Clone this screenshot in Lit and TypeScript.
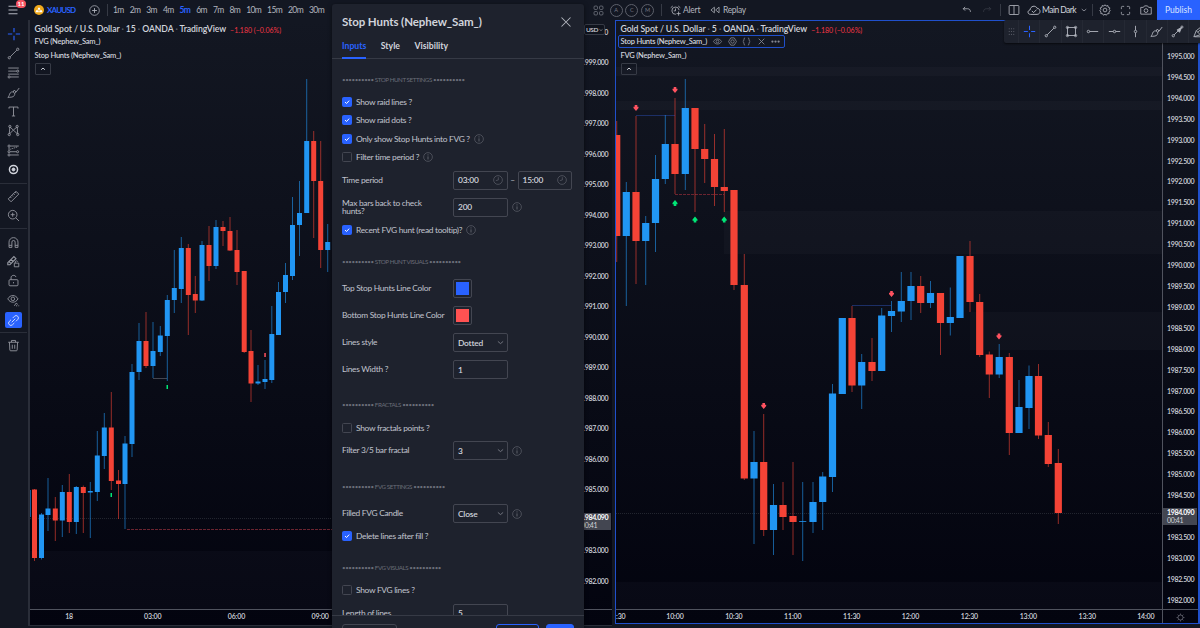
import { LitElement, html, css, svg, nothing } from 'lit';
import { customElement, property } from 'lit/decorators.js';
import { classMap } from 'lit/directives/class-map.js';

type Candle = [x: number, up: number, high: number, top: number, bottom: number, low: number];

interface Line {
  x1: number;
  x2: number;
  y: number;
  kind: string;
}

interface Marker {
  x: number;
  y: number;
  dir: 'up' | 'down';
}

interface Band {
  x: number;
  y: number;
  h: number;
}

interface Pane {
  interval: string;
  active: boolean;
  indicators: string[];
  left: number;
  top: number;
  width: number;
  candleWidth: number;
  candles: Candle[];
  lines: Line[];
  markers: Marker[];
  bands: Band[];
  times: string[];
  prices: string[];
}

// the label next to the last price is left blank, its tag takes the place
const priceRange = (from: number, to: number, step: number) => {
  const prices: string[] = [];
  for (let p = from; p >= to; p -= step) {
    prices.push(p === 1984 ? '' : p.toFixed(3));
  }
  return prices;
};

const leftPane: Pane = {
  interval: '15',
  active: false,
  indicators: ['FVG (Nephew_Sam_)', 'Stop Hunts (Nephew_Sam_)'],
  left: 30,
  top: 20,
  width: 547,
  candleWidth: 5,
  candles: [
    [34.5, 0, 489, 489.5, 558, 561],
    [41.5, 1, 513, 514.5, 558, 559.5],
    [48, 1, 478, 508.5, 515, 531],
    [55.3, 0, 497, 508.5, 520.5, 541],
    [62.3, 1, 485, 492, 520.5, 537],
    [69.3, 0, 474, 492, 522, 533],
    [76.3, 1, 486, 487, 522, 534],
    [83.3, 0, 485.5, 487, 493, 533],
    [90.3, 1, 482, 491, 492.5, 538],
    [97.3, 1, 431, 455.5, 492, 501],
    [104.3, 1, 413, 427.5, 456, 469],
    [111.3, 0, 392, 427.5, 481, 490],
    [118.5, 0, 470, 480.5, 484, 519],
    [125, 1, 436, 443.5, 484, 529],
    [132, 1, 364, 372, 444, 457],
    [139, 1, 323, 341, 372, 380],
    [146, 0, 312, 341, 366, 368],
    [153, 1, 322, 351, 366, 378],
    [160.3, 1, 326, 335.5, 352, 356],
    [167.3, 1, 295, 300, 336, 381],
    [174.3, 1, 250, 288, 300, 313],
    [181.3, 1, 237, 248, 289, 303],
    [188.3, 0, 244, 248, 295, 335],
    [195.3, 0, 276, 294, 300.5, 313],
    [202, 1, 241, 245, 300.5, 301],
    [209, 0, 226, 245, 266, 281],
    [216, 1, 220, 227, 266, 269],
    [223, 0, 221, 227, 231, 246],
    [230, 0, 217, 231, 250.5, 251],
    [237, 0, 230, 250, 272, 285],
    [244.2, 0, 271, 271, 352, 353],
    [251, 0, 330, 351, 383.5, 402],
    [258, 1, 365, 381.5, 383.5, 385],
    [265, 1, 360, 379, 382, 389],
    [271.8, 1, 306, 334, 380, 383],
    [278.5, 1, 282, 292, 335, 335],
    [285.5, 1, 263, 275, 292, 303],
    [292.5, 1, 197, 225, 276, 280],
    [299.5, 1, 181, 213, 225, 256],
    [306.7, 1, 79, 141, 213, 213],
    [313.7, 0, 131, 141, 181, 238],
    [320.7, 0, 141, 181, 250, 268],
    [327.7, 1, 224, 242, 250, 272],
  ],
  lines: [
    { x1: 153, x2: 167, y: 378.5, kind: 'muted' },
    { x1: 127, x2: 577, y: 529.5, kind: 'raid-low' },
    { x1: 30, x2: 577, y: 518.5, kind: 'price' },
  ],
  markers: [],
  bands: [{ x: 30, y: 551, h: 58 }],
  times: ['18', '03:00', '06:00', '09:00'],
  prices: ['0', ...priceRange(1999, 1982, 1)],
};

const rightPane: Pane = {
  interval: '5',
  active: true,
  indicators: ['Stop Hunts (Nephew_Sam_)', 'FVG (Nephew_Sam_)'],
  left: 616,
  top: 21,
  width: 546,
  candleWidth: 7.2,
  candles: [
    [616.7, 0, 121, 135, 236, 262],
    [626.3, 1, 182, 192, 236, 306],
    [636, 0, 116, 192, 241, 284],
    [645.7, 1, 216, 223, 241, 285],
    [655.5, 1, 155, 179, 223, 252],
    [665.3, 1, 115, 144, 179, 184],
    [675, 0, 98, 144, 174, 194],
    [685.3, 1, 79, 108, 174, 190],
    [695, 0, 108, 108, 149, 212],
    [704.7, 0, 124, 149, 159, 183],
    [714.5, 0, 134, 159, 187, 206],
    [724.3, 0, 129, 187, 191, 212],
    [734, 0, 190, 190, 285, 290],
    [744.3, 0, 254, 285, 478.5, 480],
    [754, 1, 431, 462, 478.5, 544],
    [763.7, 0, 414, 462, 530, 536],
    [773.5, 1, 484, 505, 530, 555],
    [783, 0, 482, 505, 517, 530],
    [793, 0, 462, 516, 522, 555],
    [802.7, 1, 482, 521, 521.8, 561],
    [813, 1, 482, 502, 522, 533],
    [822.7, 1, 472, 476.5, 502, 530],
    [832.5, 1, 384, 393.5, 477, 492],
    [842.3, 1, 318, 318, 394, 394],
    [852, 0, 306, 318, 385.5, 392],
    [861.7, 1, 354, 362, 385.5, 409],
    [872, 0, 338, 362, 371, 381],
    [881.7, 1, 308, 315.5, 371, 371],
    [891.5, 1, 301, 311, 316, 332],
    [901.3, 1, 272, 301, 311.5, 322],
    [911, 1, 272, 286, 301, 320],
    [920.7, 0, 276, 286, 303, 313],
    [930.5, 1, 281, 293, 303, 308],
    [940.5, 0, 293, 293, 323, 355],
    [950.3, 1, 287.5, 317, 323, 335.5],
    [960, 1, 256, 256, 318, 318],
    [970, 0, 241, 256, 302, 312],
    [979.7, 0, 294, 302, 355, 357],
    [989.3, 0, 351.5, 354.5, 374.5, 398],
    [999.2, 1, 344, 357, 374.5, 378],
    [1009.3, 0, 353, 357, 433, 455],
    [1019, 1, 380, 407, 433, 433],
    [1029, 1, 365.5, 376, 408, 429],
    [1038.5, 0, 364, 376, 435.5, 439],
    [1048.3, 0, 422, 435, 464, 467],
    [1058.3, 0, 449, 463, 513, 524],
  ],
  lines: [
    { x1: 636, x2: 675, y: 115.5, kind: 'raid-high' },
    { x1: 675, x2: 724, y: 194.5, kind: 'raid-low' },
    { x1: 852, x2: 891, y: 305.5, kind: 'raid-high' },
    { x1: 616, x2: 1162, y: 513.5, kind: 'price' },
  ],
  markers: [
    { x: 636, y: 108, dir: 'down' },
    { x: 675, y: 90, dir: 'down' },
    { x: 763.7, y: 406, dir: 'down' },
    { x: 891.5, y: 294, dir: 'down' },
    { x: 999, y: 336.5, dir: 'down' },
    { x: 675, y: 203, dir: 'up' },
    { x: 695, y: 219.5, dir: 'up' },
    { x: 724.2, y: 219.5, dir: 'up' },
  ],
  bands: [
    { x: 616, y: 67, h: 9 },
    { x: 616, y: 101, h: 9 },
    { x: 724, y: 211, h: 43 },
    { x: 970, y: 312, h: 38 },
    { x: 616, y: 582, h: 27 },
  ],
  times: [':30', '10:00', '10:30', '11:00', '11:30', '12:00', '12:30', '13:00', '13:30', '14:00'],
  prices: priceRange(1995, 1982, 0.5),
};

// 16x16 stroke icons
const icons = {
  menu: svg`<path d="M2 3h12M2 8h12M2 13h12" stroke-width="1.6"/>`,
  cross: svg`<path d="M8 1v5M8 10v5M1 8h5M10 8h5" stroke-width="1.3"/>`,
  line: svg`<path d="M3.8 12.2l8.4-8.4"/><circle cx="2.8" cy="13.2" r="1.4"/><circle cx="13.2" cy="2.8" r="1.4"/>`,
  fib: svg`<path d="M1.5 2.5h13M1.5 6.3h10.5M1.5 10h13M4 13.5h10.5"/><circle cx="13.2" cy="6.3" r="1.3"/><circle cx="2.6" cy="13.5" r="1.3"/>`,
  brush: svg`<path d="M1 14c2-1 1.5-3.5 3-5.5 1.5-2 4.5-1.5 5.3.3.8 2.2-.8 4.4-3.3 4.8-1.8.3-3.5.4-5 .4zM7.5 7.5L9 5l2.2 2.5L15 2.5M9.5 9l1.7-1.5"/>`,
  text: svg`<path d="M2.5 4.5v-2h11v2M8 2.5v11M6 13.5h4"/>`,
  pattern: svg`<path d="M2.8 12.5L3.5 3.5l4.3 4 4.7-4 .7 9-5.4-5-5 5"/><circle cx="2.8" cy="13" r="1.4"/><circle cx="3.5" cy="3" r="1.4"/><circle cx="12.5" cy="3" r="1.4"/><circle cx="13.2" cy="13" r="1.4"/>`,
  forecast: svg`<path d="M4 2.5h10.5M4 9.5h7.5M4 13.5h10.5M2.5 4v4"/><path d="M4 6.5l9-3" stroke-dasharray="1.5 1"/><circle cx="2.5" cy="2.5" r="1.3"/><circle cx="2.5" cy="9.5" r="1.3"/><circle cx="13" cy="9.5" r="1.3"/><circle cx="2.5" cy="13.5" r="1.3"/>`,
  target: svg`<circle cx="8" cy="8" r="5" stroke-width="1.8"/><circle cx="8" cy="8" r="1.8" fill="currentColor"/>`,
  ruler: svg`<path d="M1.5 11L11 1.5 14.5 5 5 14.5zM4 8.5L5.5 10M6 6.5L7.5 8M8 4.5L9.5 6M10 2.5L11.5 4"/>`,
  zoom: svg`<circle cx="7" cy="7" r="5.3"/><path d="M11 11l3.8 3.8M4.5 7h5M7 4.5v5"/>`,
  magnet: svg`<path d="M2.5 14V7.5a5.5 5.5 0 0 1 11 0V14H10V7.5a2 2 0 0 0-4 0V14zM2.5 11.5H6M10 11.5h3.5"/>`,
  pencilLock: svg`<path d="M1 9.5L8.5 2 11 4.5 3.5 12H1zM2.5 8L5 10.5M5 5.5L7.5 8" stroke-width="1.4"/><path d="M9 10h5.5v4.5H9zM10.2 10V8.5c0-1.6 2.8-1.6 3-.3"/>`,
  lock: svg`<rect x="2.5" y="7" width="11" height="7.5" rx="1.2"/><path d="M5 7V4.5C5 1 10.5.8 11 3.8M8 10v1.5" stroke-width="1.2"/>`,
  eyeLink: svg`<path d="M1 6c3-5.5 9.5-5.5 12.5 0-3 5.500-9.500 5.500-12.500 0z"/><circle cx="7.2" cy="6" r="2.2"/><path d="M9 14.5l2.5-3.500 1.500 2M11 14.500h1.500M14 14.500h1"/>`,
  link: svg`<path d="M7 5l2.2-2.2a2.8 2.8 0 0 1 4 4L11 9M9 11l-2.2 2.2a2.8 2.8 0 0 1-4-4L5 7M5.800 10.200l4.400-4.400" stroke-width="1.2"/>`,
  trash: svg`<path d="M1.5 4h13M5.500 4V1.800h5V4M3 4l.5 9.500c0 .8.5 1 1 1h7c.5 0 1-.3 1-1L13 4M6.500 7v5M9.500 7v5"/>`,
  plus: svg`<circle cx="8" cy="8" r="7"/><path d="M8 4.5v7M4.500 8h7" stroke-width="1.3"/>`,
  grid: svg`<rect x="1.5" y="1.5" width="5" height="5" rx="1.5"/><rect x="9.5" y="1.5" width="5" height="5" rx="1.5"/><rect x="1.5" y="9.5" width="5" height="5" rx="1.5"/><rect x="9.5" y="9.5" width="5" height="5" rx="1.5"/>`,
  alarm: svg`<path d="M8.5 13.5a5.300 5.300 0 1 1 4.800-6M8 5v3.500H5.500M1 4L4 1.500M12 1.500L15 4M12.500 9.500v6M9.500 12.500h6" stroke-width="1.2"/>`,
  replay: svg`<path d="M7 3.5v9L1.5 8zM14.5 3.5v9L9 8z" stroke-width="1.2"/>`,
  undo: svg`<path d="M5 3L2 6l3 3M2 6h7c3 0 4.5 2 4.5 5" stroke-width="1.3"/>`,
  redo: svg`<path d="M11 3l3 3-3 3M14 6H7c-3 0-4.5 2-4.5 5" stroke-width="1.3"/>`,
  layout: svg`<rect x="1.5" y="2" width="13" height="12" rx="1"/><path d="M8 2v12"/>`,
  cloud: svg`<path d="M4 13C.5 13 .2 8.5 3.5 8 3.8 3.5 9.5 2 11.5 6c4.5.3 4.5 7 0 7zM5.500 9l2 2 3.500-3.500"/>`,
  chevron: svg`<path d="M2 5.5l6 5 6-5" stroke-width="1.8"/>`,
  chevronUp: svg`<path d="M3 10l5-4.5 5 4.5" stroke-width="2.6"/>`,
  gear: svg`<path d="M8 1l1.5 1.8 2.3-.8.5 2.4 2.2.8-.8 2.3L15 9l-1.8 1.5.3 2.3-2.4.2L9.700 15 8 13.600 6 15l-1.200-2-2.400-.2.3-2.300L1 9l1.400-1.500-.8-2.300 2.200-.8.5-2.400 2.200.8z"/><circle cx="8" cy="8" r="2.5"/>`,
  fullscreen: svg`<path d="M2 6V3.5Q2 2 3.5 2H6M10 2h2.5Q14 2 14 3.5V6M14 10v2.5q0 1.5-1.5 1.5H10M6 14H3.5Q2 14 2 12.500V10"/>`,
  camera: svg`<path d="M1 4.5h3.5L6 2.5h4l1.5 2H15v9H1z"/><circle cx="8" cy="8.8" r="2.5"/>`,
  close: svg`<path d="M2 2l12 12M14 2L2 14" stroke-width="1.4"/>`,
  closeBold: svg`<path d="M3 3l10 10M13 3L3 13" stroke-width="1.5"/>`,
  info: svg`<circle cx="8" cy="8" r="7"/><path d="M8 7v5M8 3.8v1.7" stroke-width="1.6"/>`,
  clock: svg`<circle cx="8" cy="8" r="7"/><path d="M8.5 3.5V8l-4 1"/>`,
  eye: svg`<path d="M.8 8C4 2 12 2 15.2 8 12 14 4 14 .8 8z" stroke-width="1.4"/><circle cx="8" cy="8" r="2.5" stroke-width="1.4"/>`,
  hexagon: svg`<path d="M5 1.5h6L15 8l-4 6.5H5L1 8z" stroke-width="1.4"/><circle cx="8" cy="8" r="3" stroke-width="1.4"/>`,
  braces: svg`<path d="M5.5 1.5C2 1.5 5 7 1.5 8 5 9 2 14.5 5.5 14.5M10.5 1.5C14 1.5 11 7 14.5 8c-3.5 1-.5 6.5-4 6.5" stroke-width="1.5"/>`,
  more: svg`<g fill="currentColor" stroke="none"><circle cx="2.5" cy="8" r="2"/><circle cx="8" cy="8" r="2"/><circle cx="13.5" cy="8" r="2"/></g>`,
  dots: svg`<g fill="currentColor" stroke="none"><circle cx="4" cy="3" r="1"/><circle cx="8" cy="3" r="1"/><circle cx="12" cy="3" r="1"/><circle cx="4" cy="8" r="1"/><circle cx="8" cy="8" r="1"/><circle cx="12" cy="8" r="1"/><circle cx="4" cy="13" r="1"/><circle cx="8" cy="13" r="1"/><circle cx="12" cy="13" r="1"/></g>`,
  rect: svg`<rect x="3" y="3" width="10" height="10"/><circle cx="3" cy="3" r="1.4"/><circle cx="13" cy="3" r="1.4"/><circle cx="3" cy="13" r="1.4"/><circle cx="13" cy="13" r="1.4"/>`,
  hray: svg`<circle cx="3" cy="8" r="1.5"/><path d="M4.5 8H15"/>`,
  hline: svg`<circle cx="8" cy="8" r="1.5"/><path d="M1 8h5.5M9.5 8H15"/>`,
  vline: svg`<circle cx="8" cy="8" r="1.5"/><path d="M8 1v5.5M8 9.5V15"/>`,
  arrow: svg`<circle cx="2.8" cy="13.2" r="1.4"/><path d="M3.8 12.2L13 3"/><path d="M7.5 6l3 3L13 3z" fill="currentColor"/><circle cx="13.5" cy="2.5" r="1.3"/>`,
  highlighter: svg`<path d="M1 14.5L4 7l7-5.5L14 5 9 12z"/><path d="M4 7l5 5M2 14.5h7M6 9l5-5"/>`,
  coin: svg`<circle cx="8" cy="8" r="8" fill="#f0a91b" stroke="none"/><path d="M5.8 7.5l.9-3h2.6l.9 3zM2.5 11.5l.9-3h3.6l.9 3zM8.1 11.500l.9-3h3.600l.9 3z" fill="#fff" stroke="none"/>`,
  sun: svg`<circle cx="8" cy="8" r="4.5"/><path d="M8 1v2M8 13v2M1 8h2M13 8h2M3 3l1.5 1.5M11.5 11.5L13 13M13 3l-1.5 1.5M4.5 11.500L3 13"/>`,
};

type IconName = keyof typeof icons;

@customElement('tv-icon')
export class TvIcon extends LitElement {
  @property() name: IconName = 'menu';

  render() {
    return html`<svg viewBox="0 0 16 16">${icons[this.name]}</svg>`;
  }

  static styles = css`
    :host {
      display: block;
      flex: none;
      width: 12px;
      height: 12px;
    }

    svg {
      display: block;
      width: 100%;
      height: 100%;
      overflow: visible;
      fill: none;
      stroke: currentColor;
      stroke-width: 1.1;
    }
  `;
}

@customElement('top-bar')
export class TopBar extends LitElement {
  intervals = ['1m', '2m', '3m', '4m', '5m', '6m', '7m', '8m', '10m', '15m', '20m', '30m'];

  render() {
    return html`
      <div class="menu">
        <tv-icon name="menu"></tv-icon>
        <span class="badge">11</span>
      </div>
      <div class="symbol">
        <tv-icon class="coin" name="coin"></tv-icon>
        <span>XAUUSD</span>
      </div>
      <tv-icon class="add" name="plus"></tv-icon>
      <i class="sep"></i>
      <div class="intervals">
        ${this.intervals.map(
          i => html`<span class=${classMap({ current: i === '5m' })}>${i}</span>`
        )}
      </div>
      <div class="middle">
        <tv-icon class="grid" name="grid"></tv-icon>
        ${['A', 'C', 'M'].map(l => html`<span class="letter">${l}</span>`)}
        <i class="sep"></i>
        <tv-icon class="alarm" name="alarm"></tv-icon>
        <span class="alert">Alert</span>
        <tv-icon class="replay" name="replay"></tv-icon>
        <span class="replay-label">Replay</span>
      </div>
      <div class="right">
        <tv-icon class="small" name="undo"></tv-icon>
        <tv-icon class="small redo" name="redo"></tv-icon>
        <i class="sep"></i>
        <tv-icon class="layout" name="layout"></tv-icon>
        <tv-icon class="cloud" name="cloud"></tv-icon>
        <span class="name">Main Dark</span>
        <tv-icon class="caret" name="chevron"></tv-icon>
        <i class="sep"></i>
        <tv-icon class="gear" name="gear"></tv-icon>
        <tv-icon class="full" name="fullscreen"></tv-icon>
        <tv-icon class="camera" name="camera"></tv-icon>
      </div>
      <div class="publish">Publish</div>
    `;
  }

  static styles = css`
    :host {
      display: flex;
      align-items: center;
      height: 20px;
      background: #131722;
      color: #b2b5be;
      font-size: 8.5px;
      white-space: nowrap;
    }

    .menu {
      position: relative;
      width: 34px;
      box-sizing: border-box;
      padding-left: 7px;
    }

    .badge {
      position: absolute;
      left: 16px;
      top: -4px;
      width: 10px;
      height: 8px;
      border-radius: 4px;
      background: #f7525f;
      color: #fff;
      font-size: 6px;
      font-weight: 700;
      line-height: 8px;
      text-align: center;
    }

    .symbol {
      display: flex;
      align-items: center;
      gap: 3px;
      width: 54.5px;
      color: #2962ff;
      font-size: 8px;
      font-weight: 700;
      letter-spacing: -0.8px;
    }

    .coin {
      width: 10px;
      height: 10px;
    }

    .add {
      width: 11px;
      height: 11px;
    }

    .sep {
      flex: none;
      width: 1px;
      height: 12px;
      background: #363a45;
    }

    .add + .sep {
      margin-left: 7px;
    }

    .intervals {
      display: flex;
      gap: 5.9px;
      width: 484px;
      padding-left: 5.5px;
      box-sizing: border-box;
      letter-spacing: -0.6px;
    }

    .current {
      color: #2962ff;
      font-weight: 700;
    }

    .middle,
    .right {
      display: flex;
      align-items: center;
    }

    .grid {
      width: 11px;
      height: 11px;
      margin: 0 6px 0 1px;
      color: #787b86;
    }

    .letter {
      width: 11px;
      height: 11px;
      margin-right: 2.8px;
      border: 1px solid #5d606b;
      border-radius: 50%;
      color: #787b86;
      font-size: 5.5px;
      line-height: 11px;
      text-align: center;
    }

    .middle .sep {
      margin: 0 8px 0 4px;
    }

    .alarm {
      width: 11px;
      height: 11px;
    }

    .alert {
      width: 27px;
      padding-left: 2px;
      letter-spacing: -0.2px;
    }

    .replay {
      width: 10px;
      height: 10px;
      margin-right: 3px;
    }

    .replay-label {
      letter-spacing: -0.3px;
    }

    .right {
      margin-left: auto;
    }

    .small {
      width: 10px;
      height: 10px;
      margin-right: 10px;
    }

    .redo {
      color: #363a45;
      margin-right: 8px;
    }

    .layout {
      width: 12px;
      margin-left: 7px;
    }

    .cloud {
      width: 14px;
      height: 14px;
      margin: 0 1px 0 7px;
    }

    .name {
      width: 39px;
      color: #d1d4dc;
      letter-spacing: -0.55px;
    }

    .caret {
      width: 6px;
      height: 6px;
      margin-right: 5px;
    }

    .gear {
      margin-left: 6px;
    }

    .full {
      margin-left: 9px;
      width: 11px;
      height: 11px;
    }

    .camera {
      margin: 0 5px 0 9px;
    }

    .publish {
      width: 43px;
      height: 20px;
      background: #2962ff;
      color: #d9e2ff;
      line-height: 20px;
      text-align: center;
    }
  `;
}

@customElement('side-tools')
export class SideTools extends LitElement {
  groups: IconName[][] = [
    ['cross', 'line', 'fib', 'brush', 'text', 'pattern', 'forecast', 'target'],
    ['ruler', 'zoom'],
    ['magnet', 'pencilLock', 'lock', 'eyeLink', 'link'],
    ['trash'],
  ];

  render() {
    return this.groups.map(
      group => html`
        <div class="group">
          ${group.map(
            name => html`<div class="tool ${name}"><tv-icon name=${name}></tv-icon></div>`
          )}
        </div>
      `
    );
  }

  static styles = css`
    :host {
      display: flex;
      flex-direction: column;
      width: 27px;
      padding-top: 4px;
      background: #131722;
      color: #9598a1;
    }

    .group {
      display: flex;
      flex-direction: column;
      align-items: center;
      padding-bottom: 3px;
      border-bottom: 1px solid #2a2e39;
    }

    .group + .group {
      padding-top: 3px;
    }

    .group:last-child {
      border: none;
    }

    .tool {
      display: grid;
      place-items: center;
      width: 17px;
      height: 19.45px;
    }

    .tool tv-icon {
      width: 13px;
      height: 13px;
    }

    .tool.cross {
      color: #2962ff;
    }

    .tool.cross tv-icon {
      width: 14px;
      height: 14px;
    }

    .tool.target {
      color: #d1d4dc;
    }

    .tool.link {
      height: 16px;
      margin: 2px 0 1px;
      border-radius: 2px;
      background: #2962ff;
      color: #d1dcff;
    }
  `;
}

@customElement('chart-pane')
export class ChartPane extends LitElement {
  @property({ attribute: false }) pane: Pane = leftPane;

  get defs() {
    return svg`
      <defs>
        <linearGradient id="bg" x1="0" y1="0" x2="0" y2="1">
          <stop offset="0" stop-color="#131722" />
          <stop offset="1" stop-color="#03040f" />
        </linearGradient>
      </defs>
    `;
  }

  candle([x, up, high, top, bottom, low]: Candle) {
    const w = this.pane.candleWidth;
    return svg`
      <g class=${up ? 'up' : 'down'}>
        <rect class="wick" x=${x - 0.5} y=${high} width="1" height=${low - high} />
        <rect x=${x - w / 2} y=${top} width=${w} height=${bottom - top} />
      </g>
    `;
  }

  marker({ x, y, dir }: Marker) {
    const s = dir === 'up' ? -1 : 1;
    return svg`
      <path class="marker-${dir}"
        d="M${x - 1.3} ${y - 3 * s}h2.6v${1.8 * s}h1.2v${1.2 * s}l-2.5 ${3 * s}l-2.5 ${-3 * s}v${-1.2 * s}h1.2z" />
    `;
  }

  get plot() {
    const p = this.pane;
    const height = 609 - p.top;
    return html`
      <svg class="plot" viewBox="${p.left} ${p.top} ${p.width} ${height}"
        width=${p.width} height=${height}>
        ${this.defs}
        <rect x=${p.left} y=${p.top} width=${p.width} height=${height} fill="url(#bg)" />
        ${p.bands.map(
          b => svg`<rect class="band" x=${b.x} y=${b.y} width=${p.left + p.width - b.x} height=${b.h} />`
        )}
        ${p.lines.map(
          l => svg`<line class=${l.kind} x1=${l.x1} x2=${l.x2} y1=${l.y} y2=${l.y} />`
        )}
        ${p.candles.map(c => this.candle(c))} ${p.markers.map(m => this.marker(m))}
        ${p.active
          ? nothing
          : svg`
            <rect class="up wick" x="30" y="490" width="1" height="27" />
            <rect class="marker-up" x="110.5" y="493" width="1.5" height="4" />
            <rect class="marker-up" x="166.5" y="385" width="1.5" height="4" />
            <rect class="marker-down" x="264.3" y="353" width="1.5" height="4" />
          `}
      </svg>
    `;
  }

  indicator(name: string) {
    const selected = this.pane.active && name.startsWith('Stop');
    return html`
      <div class=${classMap({ indicator: true, selected })}>
        <span>${name}</span>
        ${selected
          ? html`
              <tv-icon name="eye"></tv-icon>
              <tv-icon name="hexagon"></tv-icon>
              <tv-icon name="braces"></tv-icon>
              <tv-icon name="closeBold"></tv-icon>
              <tv-icon name="more"></tv-icon>
            `
          : nothing}
      </div>
    `;
  }

  get legend() {
    return html`
      <div class="legend">
        <div class="title">
          <span class="name">
            Gold Spot / U.S. Dollar <i>·</i> ${this.pane.interval} <i>·</i> OANDA <i>·</i>
            TradingView
          </span>
          <span class="change">−1.180 (−0.06%)</span>
        </div>
        ${this.pane.indicators.map(n => this.indicator(n))}
        <div class="collapse"><tv-icon name="chevronUp"></tv-icon></div>
      </div>
    `;
  }

  render() {
    const { active, prices, times } = this.pane;
    return html`
      <div class=${classMap({ pane: true, active })}>
        <div class="row">
          <div class="canvas">${this.plot} ${this.legend}</div>
          <div class="prices">
            ${prices.map(p => html`<span>${p}</span>`)}
            ${active ? nothing : html`<div class="usd">USD<tv-icon name="chevron"></tv-icon></div>`}
            <div class="last"><b>1984.090</b>00:41</div>
          </div>
        </div>
        <div class="times">
          <div class="ticks">${times.map(t => html`<span>${t}</span>`)}</div>
          ${active ? html`<tv-icon class="sun" name="sun"></tv-icon>` : nothing}
        </div>
      </div>
    `;
  }

  static styles = css`
    :host {
      display: block;
      font-size: 7px;
      color: #d1d4dc;
    }

    .pane {
      display: flex;
      flex-direction: column;
      height: 100%;
      box-sizing: border-box;
      background: linear-gradient(#131722, #03040f);
      border-left: 2px solid #2a2e39;
    }

    .pane.active {
      border: solid #2050cc;
      border-width: 1px 2px 1px 1px;
    }

    .row {
      display: flex;
      height: 589px;
    }

    .active .row {
      height: 588px;
    }

    .canvas {
      position: relative;
      flex: none;
    }

    .plot {
      display: block;
    }

    .up {
      fill: #2196f3;
    }

    .down {
      fill: #f44336;
    }

    .wick {
      opacity: 0.6;
    }

    .band {
      fill: #868993;
      opacity: 0.048;
    }

    line {
      stroke-width: 1;
    }

    .price {
      stroke: #22252f;
      stroke-dasharray: 1 1;
    }

    .raid-low {
      stroke: #6b2430;
      stroke-dasharray: 3 1;
    }

    .raid-high {
      stroke: #1c2f66;
    }

    .muted {
      stroke: #434651;
    }

    .marker-up {
      fill: #00e676;
    }

    .marker-down {
      fill: #ff5260;
    }

    .legend {
      position: absolute;
      left: 4.5px;
      top: 2px;
      font-weight: 600;
      white-space: nowrap;
    }

    .active .legend {
      top: 1px;
    }

    .title {
      display: flex;
      align-items: center;
      gap: 4px;
      height: 13px;
    }

    .name {
      font-size: 8.7px;
      letter-spacing: -0.08px;
    }

    .name i {
      color: #5d606b;
      font-style: normal;
    }

    .change {
      padding-top: 3px;
      color: #f23645;
      font-size: 7px;
      font-weight: 400;
    }

    .indicator {
      display: flex;
      align-items: center;
      height: 13.5px;
      font-size: 7.5px;
      letter-spacing: -0.22px;
    }

    .selected {
      justify-content: space-between;
      width: 160px;
      height: 11px;
      margin: 0.25px 0 0.25px -2.5px;
      padding: 0 3px 0 1.5px;
      border: 1px solid #2050cc;
      border-radius: 2px;
      background: #131722;
    }

    .selected tv-icon {
      width: 9px;
      height: 9px;
      color: #868993;
    }

    .collapse {
      display: grid;
      place-items: center;
      width: 14px;
      height: 10px;
      margin-top: 0.5px;
      border: 1px solid #363a45;
      border-radius: 1px;
    }

    .collapse tv-icon {
      width: 6px;
      height: 6px;
    }

    .prices {
      position: relative;
      flex: 1;
      display: flex;
      flex-direction: column;
      overflow: hidden;
      padding-left: 4px;
      font-size: 7px;
      font-weight: 600;
      letter-spacing: -0.35px;
    }

    .active .prices {
      padding-top: 25px;
      border-left: 1px solid #50535e;
    }

    .prices span {
      flex: none;
      height: 30.53px;
      line-height: 30.53px;
      margin-top: -3.3px;
      margin-bottom: 3.3px;
    }

    .prices span:first-child {
      width: 27px;
      text-align: right;
    }

    .active .prices span {
      width: auto;
      height: 20.92px;
      line-height: 20.92px;
      margin: 0;
      text-align: left;
    }

    .usd {
      position: absolute;
      left: 7px;
      top: 4px;
      display: flex;
      align-items: center;
      justify-content: center;
      gap: 1px;
      width: 19px;
      height: 9px;
      border: 1px solid #363a45;
      border-radius: 2px;
      background: #0f131d;
      font-size: 6.5px;
    }

    .usd tv-icon {
      width: 4px;
      height: 4px;
    }

    .last {
      position: absolute;
      left: 0;
      top: 493px;
      width: 30px;
      height: 17px;
      padding-left: 4px;
      background: #434651;
      color: #d1d4dc;
      font-weight: 400;
      line-height: 8.2px;
    }

    .last b {
      display: block;
      color: #fff;
    }

    .active .last {
      top: 487px;
    }

    .times {
      display: flex;
      height: 15px;
      border-top: 1px solid #50535e;
      font-weight: 600;
      line-height: 13px;
      letter-spacing: -0.15px;
    }

    .ticks {
      display: flex;
      width: 547px;
      overflow: hidden;
      text-align: center;
    }

    .ticks span {
      flex: none;
      width: 83.7px;
      margin-left: -2.8px;
      margin-right: 2.8px;
    }

    .active .ticks {
      width: 546px;
      border-right: 1px solid #50535e;
    }

    .active .ticks span {
      width: 58.9px;
      margin: 0;
    }

    .active .ticks span:first-child {
      width: 29.5px;
      text-align: left;
    }

    .active .ticks span:last-child {
      width: auto;
      margin-left: 20.5px;
    }

    .sun {
      width: 9px;
      height: 9px;
      margin: 3px 0 0 13px;
      color: #868993;
    }
  `;
}

@customElement('settings-dialog')
export class SettingsDialog extends LitElement {
  section(label: string) {
    return html`<div class="section">••••••••••&nbsp;<span>${label}</span>&nbsp;••••••••••</div>`;
  }

  check(label: string, checked: boolean, info = false) {
    return html`
      <div class="check">
        <span class=${classMap({ box: true, checked })}>
          ${checked
            ? html`<svg viewBox="0 0 10 10"><path d="M2.5 5l1.9 1.9L7.7 3.3" /></svg>`
            : nothing}
        </span>
        <span>${label}</span>
        ${info ? html`<tv-icon name="info"></tv-icon>` : nothing}
      </div>
    `;
  }

  field(label: string, content: unknown) {
    return html`
      <div class="field">
        <span class="label">${label}</span>
        ${content}
      </div>
    `;
  }

  input(value: string, icon?: IconName) {
    return html`
      <span class="input">
        ${value} ${icon ? html`<tv-icon class=${icon} name=${icon}></tv-icon>` : nothing}
      </span>
    `;
  }

  render() {
    const info = html`<tv-icon class="info" name="info"></tv-icon>`;
    return html`
      <header>
        <h1>Stop Hunts (Nephew_Sam_)</h1>
        <tv-icon name="close"></tv-icon>
      </header>
      <nav>
        <span class="tab current">Inputs</span>
        <span class="tab">Style</span>
        <span class="tab">Visibility</span>
      </nav>
      <main>
        ${this.section('STOP HUNT SETTINGS')} ${this.check('Show raid lines ?', true)}
        ${this.check('Show raid dots ?', true)}
        ${this.check('Only show Stop Hunts into FVG ?', true, true)}
        ${this.check('Filter time period ?', false, true)}
        ${this.field(
          'Time period',
          html`${this.input('03:00', 'clock')}<span class="dash">–</span>${this.input('15:00', 'clock')}`
        )}
        ${this.field('Max bars back to check\nhunts?', html`${this.input('200')}${info}`)}
        ${this.check('Recent FVG hunt (read tooltip)?', true, true)}
        ${this.section('STOP HUNT VISUALS')}
        ${this.field('Top Stop Hunts Line Color', html`<span class="swatch blue"></span>`)}
        ${this.field('Bottom Stop Hunts Line Color', html`<span class="swatch red"></span>`)}
        ${this.field('Lines style', this.input('Dotted', 'chevron'))}
        ${this.field('Lines Width ?', this.input('1'))} ${this.section('FRACTALS')}
        ${this.check('Show fractals points ?', false)}
        ${this.field('Filter 3/5 bar fractal', html`${this.input('3', 'chevron')}${info}`)}
        ${this.section('FVG SETTINGS')}
        ${this.field('Filled FVG Candle', html`${this.input('Close', 'chevron')}${info}`)}
        ${this.check('Delete lines after fill ?', true)} ${this.section('FVG VISUALS')}
        ${this.check('Show FVG lines ?', false)} ${this.field('Length of lines', this.input('5'))}
      </main>
      <footer>
        <span class="defaults"></span>
        <span class="cancel"></span>
        <span class="ok"></span>
      </footer>
    `;
  }

  static styles = css`
    :host {
      display: flex;
      flex-direction: column;
      box-sizing: border-box;
      overflow: hidden;
      border-radius: 3px 3px 0 0;
      background: #1e222d;
      box-shadow: 0 1px 4px rgba(0, 0, 0, 0.5);
      color: #c1c4cd;
      font-size: 8.4px;
      white-space: nowrap;
    }

    header {
      display: flex;
      align-items: center;
      justify-content: space-between;
      height: 35px;
      flex: none;
      padding: 0 12.5px 0 10px;
    }

    h1 {
      margin: 0;
      color: #d1d4dc;
      font-size: 11.5px;
      font-weight: 700;
      letter-spacing: -0.08px;
    }

    header tv-icon {
      width: 12px;
      height: 12px;
      color: #b2b5be;
    }

    nav {
      display: flex;
      flex: none;
      height: 19px;
      padding-left: 10px;
      border-bottom: 1px solid #363a45;
      color: #d1d4dc;
      font-size: 8.7px;
      font-weight: 700;
      line-height: 13px;
    }

    .tab {
      margin-right: 14.5px;
    }

    .current {
      box-sizing: border-box;
      height: 20px;
      border-bottom: 2px solid #2962ff;
      color: #2962ff;
    }

    main {
      flex: 1;
      min-height: 0;
      overflow: hidden;
      padding-left: 10px;
      letter-spacing: -0.3px;
    }

    .section {
      display: flex;
      align-items: center;
      height: 26.8px;
      padding-top: 9px;
      color: #6a6d78;
      font-size: 6.2px;
      letter-spacing: -0.42px;
    }

    .section:first-child {
      margin-top: -2px;
    }

    .check {
      display: flex;
      align-items: center;
      height: 18.4px;
    }

    .box {
      width: 8px;
      height: 8px;
      margin-right: 4px;
      border: 1px solid #434651;
      border-radius: 1.5px;
    }

    .checked {
      border-color: #2962ff;
      background: #2962ff;
    }

    .box svg {
      display: block;
      fill: none;
      stroke: #fff;
      stroke-width: 1.2;
    }

    .check tv-icon {
      width: 10px;
      height: 10px;
      margin-left: 4px;
      color: #5d606b;
    }

    .field {
      display: flex;
      align-items: center;
      height: 26px;
      padding-top: 1px;
    }

    .label {
      width: 111px;
      line-height: 8.6px;
      white-space: pre-line;
    }

    .input {
      display: flex;
      align-items: center;
      justify-content: space-between;
      box-sizing: border-box;
      width: 54.5px;
      height: 19px;
      padding: 0 4px;
      border: 1px solid #434651;
      border-radius: 2px;
      color: #d1d4dc;
      font-weight: 600;
      letter-spacing: -0.2px;
    }

    .clock {
      width: 10px;
      height: 10px;
      color: #5d606b;
    }

    .chevron {
      width: 7px;
      height: 7px;
      margin-right: -1px;
      color: #868993;
    }

    .dash {
      width: 10px;
      text-align: center;
    }

    .info {
      width: 10px;
      height: 10px;
      margin-left: 4.5px;
      color: #5d606b;
    }

    .swatch {
      width: 13px;
      height: 13px;
      padding: 2px;
      border: 1px solid #434651;
      border-radius: 2px;
      background-clip: content-box;
    }

    .blue {
      background-color: #2962ff;
    }

    .red {
      background-color: #ff5252;
    }

    footer {
      display: flex;
      flex: none;
      height: 4px;
      padding: 8px 10px 0;
      overflow: hidden;
      border-top: 1px solid #363a45;
    }

    footer span {
      box-sizing: border-box;
      height: 18px;
      border: 1px solid #434651;
      border-radius: 3px;
    }

    .defaults {
      width: 55px;
    }

    footer .cancel {
      width: 43px;
      margin-left: auto;
      border-color: #2962ff;
    }

    footer .ok {
      width: 28px;
      margin-left: 7px;
      border-color: #2962ff;
      background: #2962ff;
    }
  `;
}

@customElement('drawing-bar')
export class DrawingBar extends LitElement {
  tools: IconName[] = [
    'cross',
    'line',
    'rect',
    'hray',
    'hline',
    'vline',
    'brush',
    'arrow',
    'highlighter',
  ];

  render() {
    return html`
      <tv-icon class="handle" name="dots"></tv-icon>
      ${this.tools.map(
        name => html`<div class="cell ${name}"><tv-icon name=${name}></tv-icon></div>`
      )}
    `;
  }

  static styles = css`
    :host {
      display: flex;
      align-items: center;
      overflow: hidden;
      border-radius: 2px 0 0 2px;
      background: #1e222d;
      box-shadow: 0 1px 2px rgba(0, 0, 0, 0.6);
      color: #b2b5be;
    }

    .handle {
      width: 9px;
      height: 9px;
      margin: 0 2.5px;
      color: #5d606b;
    }

    .cell {
      flex: none;
      display: grid;
      place-items: center;
      box-sizing: border-box;
      width: 21.25px;
      height: 100%;
      border-left: 1px solid #252934;
    }

    .cell tv-icon {
      width: 13px;
      height: 13px;
    }

    .cell.cross {
      color: #2962ff;
    }
  `;
}

@customElement('app-root')
export class AppRoot extends LitElement {
  render() {
    return html`
      <top-bar></top-bar>
      <div class="workspace">
        <side-tools></side-tools>
        <chart-pane class="left" .pane=${leftPane}></chart-pane>
        <chart-pane class="right" .pane=${rightPane}></chart-pane>
      </div>
      <settings-dialog></settings-dialog>
      <drawing-bar></drawing-bar>
    `;
  }

  static styles = css`
    :host {
      position: relative;
      display: flex;
      flex-direction: column;
      width: 1200px;
      height: 628px;
      overflow: hidden;
      background: #131722;
      font-family: Lato, 'Open Sans', sans-serif;
    }

    .workspace {
      display: flex;
      height: 608px;
    }

    .left {
      width: 584px;
      margin-left: 1px;
      height: 605px;
      border-bottom: 1px solid #2a2e39;
    }

    .right {
      flex: 1;
      height: 604px;
      margin-left: 3px;
    }

    settings-dialog {
      position: absolute;
      left: 332px;
      top: 4px;
      width: 252px;
      height: 624px;
    }

    drawing-bar {
      position: absolute;
      left: 1004px;
      top: 20px;
      width: 196px;
      height: 23px;
    }
  `;
}
